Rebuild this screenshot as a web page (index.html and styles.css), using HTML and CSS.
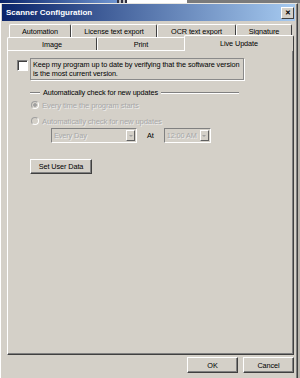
FILE: index.html
```html
<!DOCTYPE html>
<html lang="en">
<head>
    <meta charset="UTF-8">
    <meta name="viewport" content="width=device-width, initial-scale=1.0">
    <title>Scanner Configuration</title>
    <link rel="stylesheet" href="styles.css">
</head>
<body>
    <div class="backdrop">
        <div class="bd-blue"></div>
        <div class="bd-dots"></div>
        <div class="bd-white"></div>
        <div class="bd-gray"></div>
    </div>
    <div class="dialog">
        <div class="titlebar">
            <span class="title">Scanner Configuration</span>
            <span class="close">&#x2715;</span>
        </div>

        <div class="tabs">
            <div class="tab-row back">
                <div class="tab w-automation">Automation</div>
                <div class="tab w-license">License text export</div>
                <div class="tab w-ocr">OCR text export</div>
                <div class="tab w-signature">Signature</div>
            </div>
            <div class="tab-row front">
                <div class="tab w-image">Image</div>
                <div class="tab w-print">Print</div>
                <div class="tab active w-live">Live Update</div>
            </div>
        </div>

        <div class="panel">
            <div class="keep-row">
                <span class="checkbox"></span>
                <div class="keep-label">Keep my program up to date by verifying that the software version<br>is the most current version.</div>
            </div>

            <div class="group-head">
                <span class="etch short"></span>
                <span class="group-title">Automatically check for new updates</span>
                <span class="etch long"></span>
            </div>

            <div class="radio-row">
                <span class="radio checked"></span>
                <span class="disabled">Every time the program starts</span>
            </div>
            <div class="radio-row">
                <span class="radio"></span>
                <span class="disabled">Automatically check for new updates</span>
            </div>

            <div class="schedule">
                <div class="combo w-day">
                    <span class="combo-text">Every Day</span>
                    <span class="combo-btn"><span class="arrow"></span></span>
                </div>
                <span class="at">At</span>
                <div class="combo w-time">
                    <span class="combo-text">12:00 AM</span>
                    <span class="combo-btn"><span class="arrow"></span></span>
                </div>
            </div>

            <button class="btn set-user">Set User Data</button>
        </div>

        <div class="footer">
            <button class="btn dlg">OK</button>
            <button class="btn dlg">Cancel</button>
        </div>
    </div>
</body>
</html>
```

FILE: styles.css
```css
body {
    margin: 0;
    width: 300px;
    height: 378px;
    overflow: hidden;
    background-color: #b8b4ac;
    font-family: "Liberation Sans", Arial, sans-serif;
    font-size: 7.3px;
    letter-spacing: -0.1px;
    color: #000000;
    white-space: nowrap;
}

.backdrop {
    display: flex;
    height: 3px;
}

.bd-blue {
    width: 117px;
    background: linear-gradient(to right, #0a246a, #6f95d0);
}

.bd-dots {
    width: 10px;
    background: repeating-linear-gradient(to right, #303040 0 2px, #c0c0c0 2px 4px);
}

.bd-white {
    width: 60px;
    background-color: #ffffff;
}

.bd-gray {
    flex: 1;
    background-color: #7a7a7a;
}

.dialog {
    height: 375px;
    border-left: 1px solid #ffffff;
    border-top: 1px solid #e8e6e0;
    border-right: 1px solid #404040;
    width: 298px;
    box-sizing: border-box;
    background-color: #d4d0c8;
    box-shadow: inset -1px 0 0 #808080;
    padding-left: 1px;
}

.titlebar {
    height: 17px;
    margin-right: 2px;
    background: linear-gradient(to right, #0a246a, #a6caf0);
    display: flex;
    align-items: center;
    justify-content: space-between;
    padding: 0 1px 0 4px;
}

.title {
    color: #ffffff;
    font-weight: bold;
    font-size: 8px;
    letter-spacing: 0;
}

.close {
    width: 11px;
    height: 10px;
    background-color: #d4d0c8;
    border-top: 1px solid #ffffff;
    border-left: 1px solid #ffffff;
    border-right: 1px solid #404040;
    border-bottom: 1px solid #404040;
    font-size: 7px;
    font-weight: bold;
    line-height: 10px;
    text-align: center;
}

.tabs {
    margin-top: 2px;
}

.tab-row {
    display: flex;
    height: 13px;
}

.tab-row.back {
    padding-left: 7px;
    padding-top: 1px;
}

.tab-row.front {
    padding-left: 5px;
}

.tab {
    box-sizing: border-box;
    height: 100%;
    border-top: 1px solid #ffffff;
    border-left: 1px solid #ffffff;
    border-right: 1px solid #404040;
    border-radius: 2px 2px 0 0;
    display: flex;
    align-items: center;
    justify-content: center;
}

.tab.active {
    position: relative;
    z-index: 1;
    height: 16px;
    margin-top: -2px;
    background-color: #d4d0c8;
    margin-left: -1px;
}

.w-automation { width: 62px; }
.w-license { width: 86px; }
.w-ocr { width: 79px; }
.w-signature { width: 56px; }
.w-image { width: 90px; }
.w-print { width: 88px; }
.w-live { width: 110px; }

.panel {
    box-sizing: border-box;
    margin-left: 5px;
    width: 287px;
    height: 305px;
    border-top: 1px solid #ffffff;
    border-left: 1px solid #ffffff;
    border-right: 1px solid #404040;
    border-bottom: 1px solid #404040;
    box-shadow: inset -1px -1px 0 #808080;
    padding: 7px 0 0 9px;
}

.keep-row {
    display: flex;
    align-items: flex-start;
    gap: 2px;
}

.checkbox {
    margin-top: 2px;
    width: 9px;
    height: 9px;
    background-color: #ffffff;
    border-top: 1px solid #808080;
    border-left: 1px solid #808080;
    border-right: 1px solid #ffffff;
    border-bottom: 1px solid #ffffff;
    box-shadow: inset 1px 1px 0 #404040;
}

.keep-label {
    border: 1px solid #8a8a8a;
    box-shadow: 1px 1px 0 #ffffff;
    padding: 1px 1px 1px 2px;
    width: 209px;
    line-height: 9px;
}

.group-head {
    display: flex;
    align-items: center;
    margin: 8px 0 0 13px;
    gap: 3px;
}

.etch {
    height: 1px;
    background-color: #808080;
    border-bottom: 1px solid #ffffff;
}

.etch.short { width: 10px; }
.etch.long { width: 78px; }

.radio-row {
    display: flex;
    align-items: center;
    gap: 3px;
    margin: 3px 0 0 14px;
    height: 10px;
}

.radio-row + .radio-row {
    margin-top: 6px;
}

.radio {
    box-sizing: border-box;
    width: 8px;
    height: 8px;
    border-radius: 50%;
    background-color: #d4d0c8;
    border: 1px solid #a0a0a0;
    border-right-color: #ffffff;
    border-bottom-color: #ffffff;
}

.radio.checked {
    background: radial-gradient(circle, #a0a0a0 0 1.5px, #d4d0c8 2px);
}

.disabled {
    color: #a8a8a8;
    font-size: 7.6px;
    text-shadow: 1px 1px 0 #ececec;
}

.schedule {
    display: flex;
    align-items: center;
    margin: 2px 0 0 34px;
}

.combo {
    box-sizing: border-box;
    height: 15px;
    display: flex;
    align-items: center;
    justify-content: space-between;
    border-top: 1px solid #808080;
    border-left: 1px solid #808080;
    border-right: 1px solid #ffffff;
    border-bottom: 1px solid #ffffff;
    padding: 0 1px 0 2px;
}

.w-day { width: 86px; }
.w-time { width: 47px; }

.combo-text {
    color: #a8a8a8;
    text-shadow: 1px 1px 0 #ececec;
}

.combo-btn {
    width: 9px;
    height: 11px;
    background-color: #d4d0c8;
    border-top: 1px solid #ffffff;
    border-left: 1px solid #ffffff;
    border-right: 1px solid #606060;
    border-bottom: 1px solid #606060;
    display: flex;
    align-items: center;
    justify-content: center;
    box-sizing: border-box;
}

.arrow {
    width: 0;
    height: 0;
    border-left: 2px solid transparent;
    border-right: 2px solid transparent;
    border-top: 2px solid #a0a0a0;
}

.at {
    margin: 0 10px;
}

.btn {
    font-family: "Liberation Sans", Arial, sans-serif;
    font-size: 7.3px;
    letter-spacing: -0.1px;
    color: #000000;
    background-color: #d4d0c8;
    border-top: 1px solid #ffffff;
    border-left: 1px solid #ffffff;
    border-right: 1px solid #404040;
    border-bottom: 1px solid #404040;
    box-shadow: inset -1px -1px 0 #808080;
    padding: 0;
    box-sizing: border-box;
}

.set-user {
    display: block;
    margin: 16px 0 0 13px;
    width: 62px;
    height: 15px;
}

.footer {
    display: flex;
    justify-content: flex-end;
    gap: 5px;
    padding: 2px 0 0 0;
    width: 292px;
}

.btn.dlg {
    width: 51px;
    height: 16px;
}
```
